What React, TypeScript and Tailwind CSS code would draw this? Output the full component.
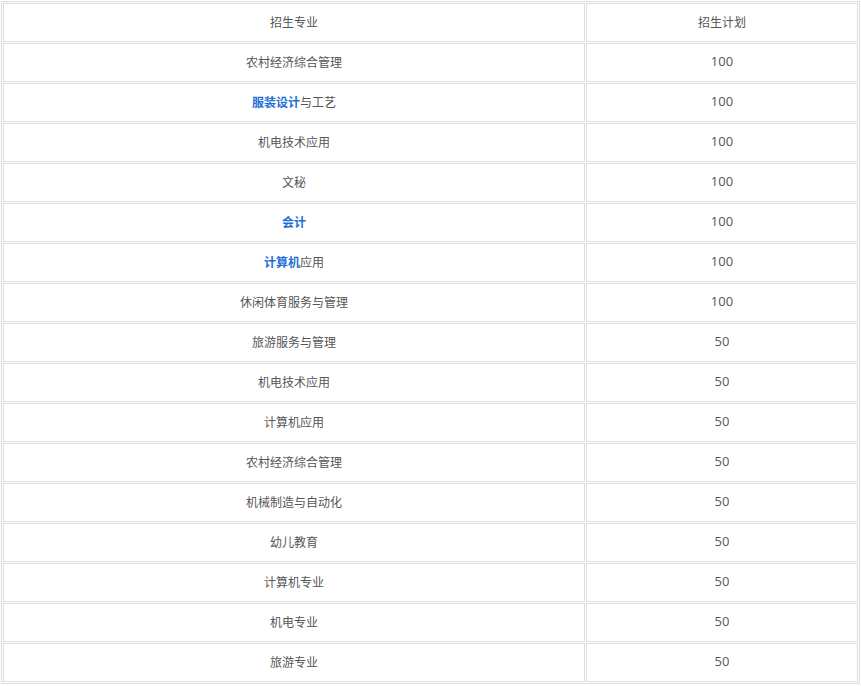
import React from 'react';

type Row = { name: React.ReactNode; plan: number };

const Blue = ({ children }: { children: React.ReactNode }) => (
  <span className="font-bold text-[#1f6fd6]">{children}</span>
);

const rows: Row[] = [
  { name: '农村经济综合管理', plan: 100 },
  { name: <><Blue>服装设计</Blue>与工艺</>, plan: 100 },
  { name: '机电技术应用', plan: 100 },
  { name: '文秘', plan: 100 },
  { name: <Blue>会计</Blue>, plan: 100 },
  { name: <><Blue>计算机</Blue>应用</>, plan: 100 },
  { name: '休闲体育服务与管理', plan: 100 },
  { name: '旅游服务与管理', plan: 50 },
  { name: '机电技术应用', plan: 50 },
  { name: '计算机应用', plan: 50 },
  { name: '农村经济综合管理', plan: 50 },
  { name: '机械制造与自动化', plan: 50 },
  { name: '幼儿教育', plan: 50 },
  { name: '计算机专业', plan: 50 },
  { name: '机电专业', plan: 50 },
  { name: '旅游专业', plan: 50 },
];

const cell = 'h-[39px] p-0 pb-px border border-[#dddddd] text-center align-middle';

export default function App() {
  return (
    <div className="pl-px pt-px bg-white font-['Noto_Sans_CJK_SC','Noto_Sans',sans-serif] text-[12px] text-[#555555]">
      {/* enrolment plan table */}
      <table className="w-[859px] table-fixed border-separate border-spacing-[1px] border border-[#dddddd]">
        <tbody>
          <tr>
            <td className={`${cell} w-[582px]`}>招生专业</td>
            <td className={`${cell} w-[272px]`}>招生计划</td>
          </tr>
          {rows.map((r, i) => (
            <tr key={i}>
              <td className={cell}>{r.name}</td>
              <td className={`${cell} font-['Open_Sans',sans-serif] text-[13px]`}>{r.plan}</td>
            </tr>
          ))}
        </tbody>
      </table>
    </div>
  );
}
